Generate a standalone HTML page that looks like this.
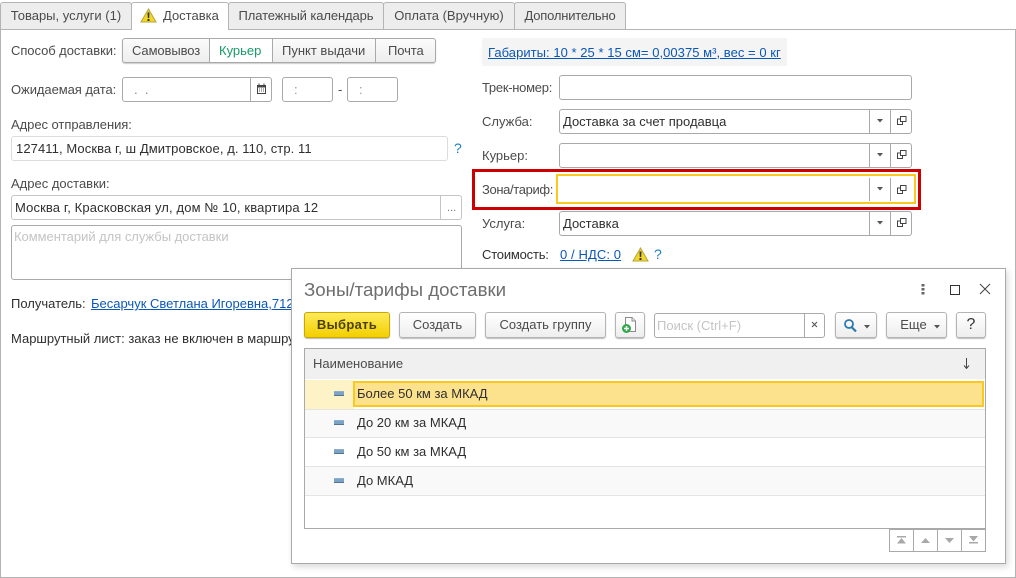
<!DOCTYPE html>
<html><head><meta charset="utf-8">
<style>
html,body{margin:0;padding:0;background:#fff}
#p{position:relative;width:1016px;height:578px;overflow:hidden;background:#fff;font:13px/14px "Liberation Sans",Arial,sans-serif;color:#333}
#p div,#p a,#p svg{position:absolute;box-sizing:border-box}
.t{white-space:nowrap;color:#4b4b4b}
.v{white-space:nowrap;color:#2f2f2f}
a{color:#0b57b8;text-decoration:underline;white-space:nowrap}
.tab{top:2px;height:27px;background:#ededed;border:1px solid #b4b4b4;border-bottom:0;border-radius:3px 3px 0 0;text-align:center;line-height:25px;color:#4b4b4b;white-space:nowrap}
.f{background:#fff;border:1px solid #a9a9a9;border-radius:3px}
.vl{width:1px;background:#a9a9a9}
.b{border:1px solid #b4b4b4;border-radius:3px;background:linear-gradient(#fff,#eee);box-shadow:0 1px 1px #bbb;text-align:center;line-height:24px;color:#4b4b4b;white-space:nowrap}
.row{left:305px;width:680px;border-bottom:1px solid #e4e4e4}
.m{left:334px;width:10px;height:5px;background:#7ba3c8;border-bottom:1px solid #55758f;border-top:1px solid #8fb0cc}
.q{color:#1a7fc4;font-size:14px}
.n{top:529px;width:25px;height:23px;border:1px solid #a9a9a9;background:#fff}
</style></head><body><div id="p">

<div style="left:0;top:29px;width:1016px;height:549px;border:1px solid #b4b4b4;background:#fff"></div>

<div class="tab" style="left:0;width:132px">Товары, услуги (1)</div>
<div class="tab" style="left:228px;width:156px;letter-spacing:-.1px">Платежный календарь</div>
<div class="tab" style="left:383px;width:132px">Оплата (Вручную)</div>
<div class="tab" style="left:514px;width:112px;letter-spacing:-.2px">Дополнительно</div>
<div class="tab" style="left:131px;width:98px;height:28px;background:#fff;text-align:left;padding-left:31px">Доставка</div>
<svg style="left:140px;top:8px" width="17" height="15" viewBox="0 0 17 15"><path d="M8.500 1L16 14H1Z" fill="#f3d728" stroke="#b5a53a"/><path d="M7.500 4.500h2l-.3 5.500H7.800zM7.500 11h2v2h-2z" fill="#333"/></svg>

<div class="t" style="left:11px;top:44px;letter-spacing:-.06px">Способ доставки:</div>
<div class="f" style="left:122px;top:38px;width:314px;height:25px;box-shadow:0 1px 1px #ccc;background:linear-gradient(#fbfbfb,#eee)"></div>
<div style="left:210px;top:39px;width:62px;height:23px;background:#fff"></div>
<div class="vl" style="left:209px;top:38px;height:25px"></div>
<div class="vl" style="left:272px;top:38px;height:25px"></div>
<div class="vl" style="left:375px;top:38px;height:25px"></div>
<div class="t" style="left:132px;top:44px;letter-spacing:-.1px">Самовывоз</div>
<div class="t" style="left:219px;top:44px;color:#1a9a68">Курьер</div>
<div class="t" style="left:282px;top:44px">Пункт выдачи</div>
<div class="t" style="left:388px;top:44px;letter-spacing:-.1px">Почта</div>

<div class="t" style="left:11px;top:83px;letter-spacing:-.06px">Ожидаемая дата:</div>
<div class="f" style="left:122px;top:77px;width:150px;height:25px"></div>
<div class="vl" style="left:250px;top:77px;height:25px"></div>
<div class="t" style="left:134px;top:83px;color:#888">.&nbsp;&nbsp;.</div>
<svg style="left:256px;top:83px" width="12" height="12" viewBox="0 0 12 12"><rect x="1.500" y="2.500" width="8" height="8" fill="#fff" stroke="#444"/><rect x="1" y="2" width="9" height="2.500" fill="#444"/><path d="M3 .5v2M8 .5v2" stroke="#444"/><path d="M3 6h1M5 6h1M7 6h1M3 8h1M5 8h1M7 8h1" stroke="#555"/></svg>
<div class="f" style="left:282px;top:77px;width:51px;height:25px"></div>
<div class="f" style="left:347px;top:77px;width:51px;height:25px"></div>
<div class="t" style="left:294px;top:83px;color:#999">:</div>
<div class="t" style="left:359px;top:83px;color:#999">:</div>
<div class="t" style="left:338px;top:83px">-</div>

<div class="t" style="left:11px;top:118px;letter-spacing:-.05px">Адрес отправления:</div>
<div class="f" style="left:11px;top:136px;width:437px;height:25px;border-color:#dcdcdc"></div>
<div class="v" style="left:16px;top:142px;letter-spacing:.09px">127411, Москва г, ш Дмитровское, д. 110, стр. 11</div>
<div class="q" style="left:454px;top:141px">?</div>

<div class="t" style="left:11px;top:177px">Адрес доставки:</div>
<div class="f" style="left:11px;top:195px;width:451px;height:25px;border-color:#c4c4c4"></div>
<div class="vl" style="left:440px;top:195px;height:25px;background:#c4c4c4"></div>
<div class="t" style="left:447px;top:201px;color:#777;font-size:11px">...</div>
<div class="v" style="left:15px;top:201px;letter-spacing:.13px">Москва г, Красковская ул, дом № 10, квартира 12</div>
<div class="f" style="left:11px;top:225px;width:451px;height:55px"></div>
<div class="t" style="left:14px;top:230px;color:#c4c4c4;letter-spacing:-.03px">Комментарий для службы доставки</div>

<div class="v" style="left:11px;top:297px">Получатель:</div>
<a style="left:91px;top:297px">Бесарчук Светлана Игоревна,712</a>
<div class="v" style="left:11px;top:332px">Маршрутный лист: заказ не включен в маршру</div>

<div style="left:482px;top:38px;width:305px;height:28px;background:#f4f4f4"></div>
<a style="left:488px;top:46px;letter-spacing:.04px">Габариты: 10 * 25 * 15 см= 0,00375 м³, вес = 0 кг</a>

<div class="t" style="left:482px;top:81px;letter-spacing:-.28px">Трек-номер:</div>
<div class="f" style="left:559px;top:75px;width:353px;height:25px"></div>

<div class="t" style="left:482px;top:115px">Служба:</div>
<div class="f" style="left:559px;top:109px;width:353px;height:25px"></div>
<div class="v" style="left:563px;top:115px">Доставка за счет продавца</div>

<div class="t" style="left:482px;top:149px">Курьер:</div>
<div class="f" style="left:559px;top:143px;width:353px;height:25px"></div>

<div style="left:472px;top:169px;width:449px;height:41px;border:3px solid #cc0000"></div>
<div class="t" style="left:482px;top:183px;letter-spacing:-.36px">Зона/тариф:</div>
<div style="left:556px;top:174px;width:360px;height:30px;border:2px solid #fcc820;background:transparent"></div>

<div class="t" style="left:482px;top:217px">Услуга:</div>
<div class="f" style="left:559px;top:211px;width:353px;height:25px"></div>
<div class="v" style="left:563px;top:217px">Доставка</div>

<div class="vl" style="left:869px;top:109px;height:25px"></div><div class="vl" style="left:890px;top:109px;height:25px"></div>
<div class="vl" style="left:869px;top:143px;height:25px"></div><div class="vl" style="left:890px;top:143px;height:25px"></div>
<div class="vl" style="left:869px;top:178px;height:23px"></div><div class="vl" style="left:890px;top:178px;height:23px"></div>
<div class="vl" style="left:869px;top:211px;height:25px"></div><div class="vl" style="left:890px;top:211px;height:25px"></div>

<svg style="left:877px;top:119px" width="7" height="4"><path d="M0 0h6L3 3.500Z" fill="#555"/></svg>
<svg style="left:877px;top:153px" width="7" height="4"><path d="M0 0h6L3 3.500Z" fill="#555"/></svg>
<svg style="left:877px;top:187px" width="7" height="4"><path d="M0 0h6L3 3.500Z" fill="#555"/></svg>
<svg style="left:877px;top:221px" width="7" height="4"><path d="M0 0h6L3 3.500Z" fill="#555"/></svg>

<svg style="left:897px;top:116px" width="10" height="10" viewBox="0 0 10 10"><path d="M3.500.5h5.500v5h-5.500zM3.500 3H.5v5.500h5V5.500" fill="none" stroke="#444"/></svg>
<svg style="left:897px;top:150px" width="10" height="10" viewBox="0 0 10 10"><path d="M3.500.5h5.500v5h-5.500zM3.500 3H.5v5.500h5V5.500" fill="none" stroke="#444"/></svg>
<svg style="left:897px;top:185px" width="10" height="10" viewBox="0 0 10 10"><path d="M3.500.5h5.500v5h-5.500zM3.500 3H.5v5.500h5V5.500" fill="none" stroke="#444"/></svg>
<svg style="left:897px;top:218px" width="10" height="10" viewBox="0 0 10 10"><path d="M3.500.5h5.500v5h-5.500zM3.500 3H.5v5.500h5V5.500" fill="none" stroke="#444"/></svg>

<div class="v" style="left:482px;top:248px;letter-spacing:-.2px">Стоимость:</div>
<a style="left:560px;top:248px;letter-spacing:.1px">0 / НДС: 0</a>
<svg style="left:632px;top:247px" width="17" height="15" viewBox="0 0 17 15"><path d="M8.500 1L16 14H1Z" fill="#f3d728" stroke="#b5a53a"/><path d="M7.500 4.500h2l-.3 5.500H7.800zM7.500 11h2v2h-2z" fill="#333"/></svg>
<div class="q" style="left:654px;top:247px">?</div>

<!-- dialog -->
<div style="left:291px;top:268px;width:715px;height:296px;background:#fff;border:1px solid #a9a9a9;box-shadow:2px 3px 6px rgba(0,0,0,.15)"></div>
<div style="left:304px;top:279px;font-size:18.700px;line-height:22px;color:#6e6e6e;white-space:nowrap">Зоны/тарифы доставки</div>
<svg style="left:920px;top:283px" width="6" height="13"><rect x="1.500" y="1" width="3" height="2.500" fill="#666"/><rect x="1.500" y="5" width="3" height="2.500" fill="#666"/><rect x="1.500" y="9" width="3" height="2.500" fill="#666"/></svg>
<div style="left:950px;top:285px;width:10px;height:10px;border:1px solid #333"></div>
<svg style="left:979px;top:283px" width="12" height="12"><path d="M1 1L11 11M11 1L1 11" stroke="#444" fill="none"/></svg>

<div class="b" style="left:304px;top:312px;width:86px;height:26px;background:linear-gradient(#fdea5a,#f3cf00);border-color:#c9a800;font-weight:bold;color:#4b4000;letter-spacing:.3px">Выбрать</div>
<div class="b" style="left:399px;top:312px;width:77px;height:26px">Создать</div>
<div class="b" style="left:485px;top:312px;width:121px;height:26px">Создать группу</div>
<div class="b" style="left:615px;top:312px;width:30px;height:26px"></div>
<svg style="left:621px;top:316px" width="18" height="18" viewBox="0 0 18 18"><path d="M4.500 1.500h6.500l3.500 3.500v10.500h-10z" fill="#fff" stroke="#8a8a8a"/><path d="M11 1.500v3.500h3.500" fill="#eee" stroke="#8a8a8a"/><circle cx="5.500" cy="12.500" r="4.500" fill="#2fa84a"/><path d="M3 12.500h5M5.500 10v5" stroke="#fff" stroke-width="1.500"/></svg>
<div class="f" style="left:654px;top:313px;width:171px;height:25px"></div>
<div class="vl" style="left:804px;top:313px;height:25px"></div>
<div class="t" style="left:657px;top:319px;color:#c4c4c4">Поиск (Ctrl+F)</div>
<svg style="left:811px;top:321px" width="7" height="7"><path d="M1 1L6 6M6 1L1 6" stroke="#555" fill="none" stroke-width="1.100"/></svg>
<div class="b" style="left:835px;top:312px;width:42px;height:26px"></div>
<svg style="left:843px;top:319px" width="14" height="13" viewBox="0 0 14 13"><circle cx="6" cy="5" r="4" fill="none" stroke="#2a7ab0" stroke-width="1.800"/><path d="M8.500 8L13 12.500" stroke="#2a7ab0" stroke-width="2.200"/></svg>
<svg style="left:864px;top:325px" width="7" height="4"><path d="M0 0h6L3 3.500Z" fill="#555"/></svg>
<div class="b" style="left:886px;top:312px;width:61px;height:26px;padding-right:6px">Еще</div>
<svg style="left:934px;top:325px" width="7" height="4"><path d="M0 0h6L3 3.500Z" fill="#555"/></svg>
<div class="b" style="left:956px;top:312px;width:30px;height:26px;font-size:16px;color:#333">?</div>

<div style="left:304px;top:348px;width:682px;height:181px;border:1px solid #a9a9a9;background:#fff"></div>
<div style="left:305px;top:349px;width:680px;height:30px;background:#f0f0f0"></div>
<div class="t" style="left:313px;top:357px">Наименование</div>
<svg style="left:963px;top:358px" width="7" height="11"><path d="M3.500 0v9.500M1 7.500l2.500 3 2.500-3" fill="none" stroke="#444"/></svg>

<div class="row" style="top:380px;height:30px;background:#fdf3c7;width:49px"></div>
<div class="row" style="top:409px;height:1px;border:0;background:#e4e4e4"></div>
<div style="left:353px;top:381px;width:631px;height:26px;background:#fde28e;border:2px solid #fcc820"></div>
<div class="m" style="top:391px"></div>
<div class="v" style="left:357px;top:387px">Более 50 км за МКАД</div>

<div class="row" style="top:410px;height:28px;background:#f9f9f9"></div>
<div class="m" style="top:420px"></div>
<div class="v" style="left:357px;top:416px">До 20 км за МКАД</div>

<div class="row" style="top:438px;height:29px;background:#fff"></div>
<div class="m" style="top:449px"></div>
<div class="v" style="left:357px;top:445px">До 50 км за МКАД</div>

<div class="row" style="top:467px;height:29px;background:#f9f9f9"></div>
<div class="m" style="top:478px"></div>
<div class="v" style="left:357px;top:474px">До МКАД</div>

<div class="n" style="left:889px"></div><div class="n" style="left:913px"></div><div class="n" style="left:937px"></div><div class="n" style="left:961px"></div>
<svg style="left:896px;top:536px" width="11" height="8"><path d="M1 0h9v1.500H1zM5.500 2L10 7.500H1z" fill="#a8a8a8"/></svg>
<svg style="left:920px;top:537px" width="11" height="7"><path d="M5.500 1L10 6H1z" fill="#a8a8a8"/></svg>
<svg style="left:944px;top:537px" width="11" height="7"><path d="M1 1h9L5.500 6z" fill="#a8a8a8"/></svg>
<svg style="left:968px;top:536px" width="11" height="8"><path d="M1 0h9L5.500 5.500zM1 6h9v1.500H1z" fill="#a8a8a8"/></svg>

</div></body></html>
